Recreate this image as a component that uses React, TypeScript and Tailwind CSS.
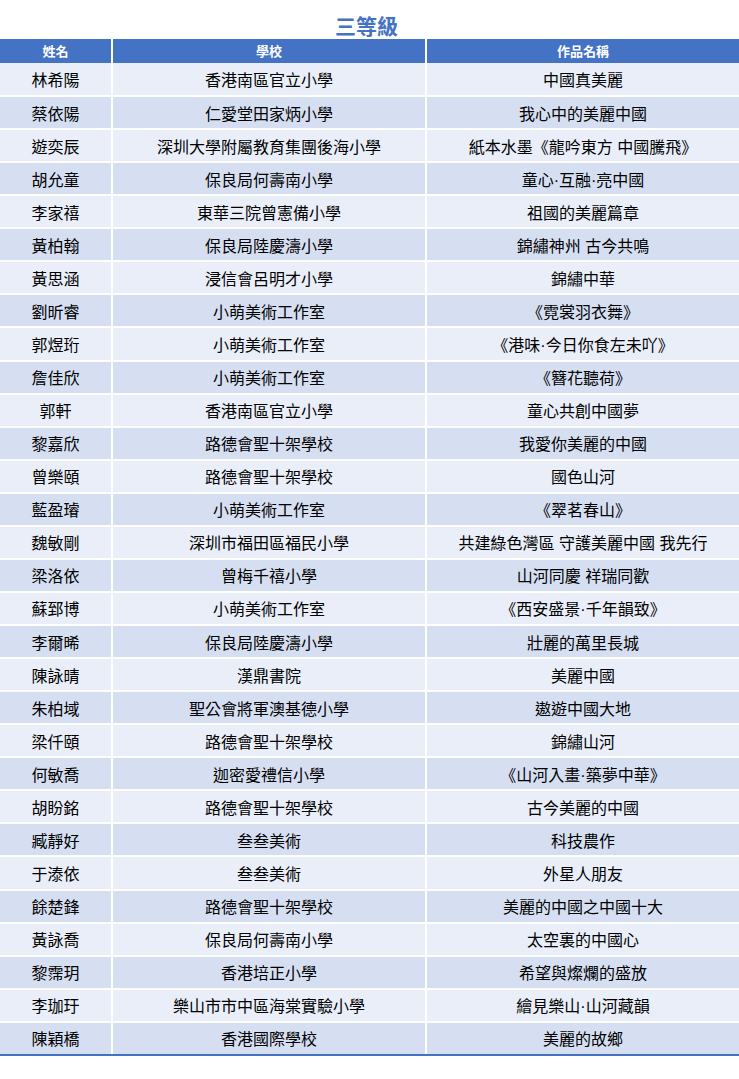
const rows: [string, string, string][] = [
  ["林希陽", "香港南區官立小學", "中國真美麗"],
  ["蔡依陽", "仁愛堂田家炳小學", "我心中的美麗中國"],
  ["遊奕辰", "深圳大學附屬教育集團後海小學", "紙本水墨《龍吟東方 中國騰飛》"],
  ["胡允童", "保良局何壽南小學", "童心·互融·亮中國"],
  ["李家禧", "東華三院曾憲備小學", "祖國的美麗篇章"],
  ["黃柏翰", "保良局陸慶濤小學", "錦繡神州 古今共鳴"],
  ["黃思涵", "浸信會呂明才小學", "錦繡中華"],
  ["劉昕睿", "小萌美術工作室", "《霓裳羽衣舞》"],
  ["郭煜珩", "小萌美術工作室", "《港味·今日你食左未吖》"],
  ["詹佳欣", "小萌美術工作室", "《簪花聽荷》"],
  ["郭軒", "香港南區官立小學", "童心共創中國夢"],
  ["黎嘉欣", "路德會聖十架學校", "我愛你美麗的中國"],
  ["曾樂頤", "路德會聖十架學校", "國色山河"],
  ["藍盈璿", "小萌美術工作室", "《翠茗春山》"],
  ["魏敏剛", "深圳市福田區福民小學", "共建綠色灣區 守護美麗中國 我先行"],
  ["梁洛依", "曾梅千禧小學", "山河同慶 祥瑞同歡"],
  ["蘇郅博", "小萌美術工作室", "《西安盛景·千年韻致》"],
  ["李爾晞", "保良局陸慶濤小學", "壯麗的萬里長城"],
  ["陳詠晴", "漢鼎書院", "美麗中國"],
  ["朱柏域", "聖公會將軍澳基德小學", "遨遊中國大地"],
  ["梁仟頤", "路德會聖十架學校", "錦繡山河"],
  ["何敏喬", "迦密愛禮信小學", "《山河入畫·築夢中華》"],
  ["胡盼銘", "路德會聖十架學校", "古今美麗的中國"],
  ["臧靜好", "叁叁美術", "科技農作"],
  ["于溙依", "叁叁美術", "外星人朋友"],
  ["餘楚鋒", "路德會聖十架學校", "美麗的中國之中國十大"],
  ["黃詠喬", "保良局何壽南小學", "太空裏的中國心"],
  ["黎霈玥", "香港培正小學", "希望與燦爛的盛放"],
  ["李珈玗", "樂山市市中區海棠實驗小學", "繪見樂山·山河藏韻"],
  ["陳穎橋", "香港國際學校", "美麗的故鄉"],
];

export default function App() {
  return (
    <div className="w-[739px] min-h-[1079px] bg-white font-['Liberation_Sans','Noto_Sans_CJK_TC',sans-serif] text-black">
      <div className="flex justify-center pt-[16px] pb-[2px] pr-[6px]">
        <h2 className="text-[21px] leading-[21px] font-bold text-[#4472C4]">三等級</h2>
      </div>

      <div className="grid grid-cols-[111px_312px_312px] gap-x-[2px] h-[24px] text-[13px] font-bold text-white">
        <div className="flex items-center justify-center pt-[2px] bg-[#4472C4]">姓名</div>
        <div className="flex items-center justify-center pt-[2px] bg-[#4472C4]">學校</div>
        <div className="flex items-center justify-center pt-[2px] bg-[#4472C4]">作品名稱</div>
      </div>

      <div className="flex flex-col gap-y-[2px] border-b-2 border-[#4472C4] text-[16px]">
        {rows.map(([name, school, work], i) => {
          const bg = i % 2 === 0 ? "bg-[#E9EEF8]" : "bg-[#D6DFF2]";
          const h = i === 0 ? "h-[32px]" : "h-[31.07px]";
          return (
            <div key={i} className={`grid grid-cols-[111px_312px_312px] gap-x-[2px] ${h}`}>
              <div className={`flex items-center justify-center pt-[4px] ${bg}`}>{name}</div>
              <div className={`flex items-center justify-center pt-[4px] ${bg}`}>{school}</div>
              <div className={`flex items-center justify-center pt-[4px] whitespace-pre ${bg}`}>{work}</div>
            </div>
          );
        })}
      </div>
    </div>
  );
}
